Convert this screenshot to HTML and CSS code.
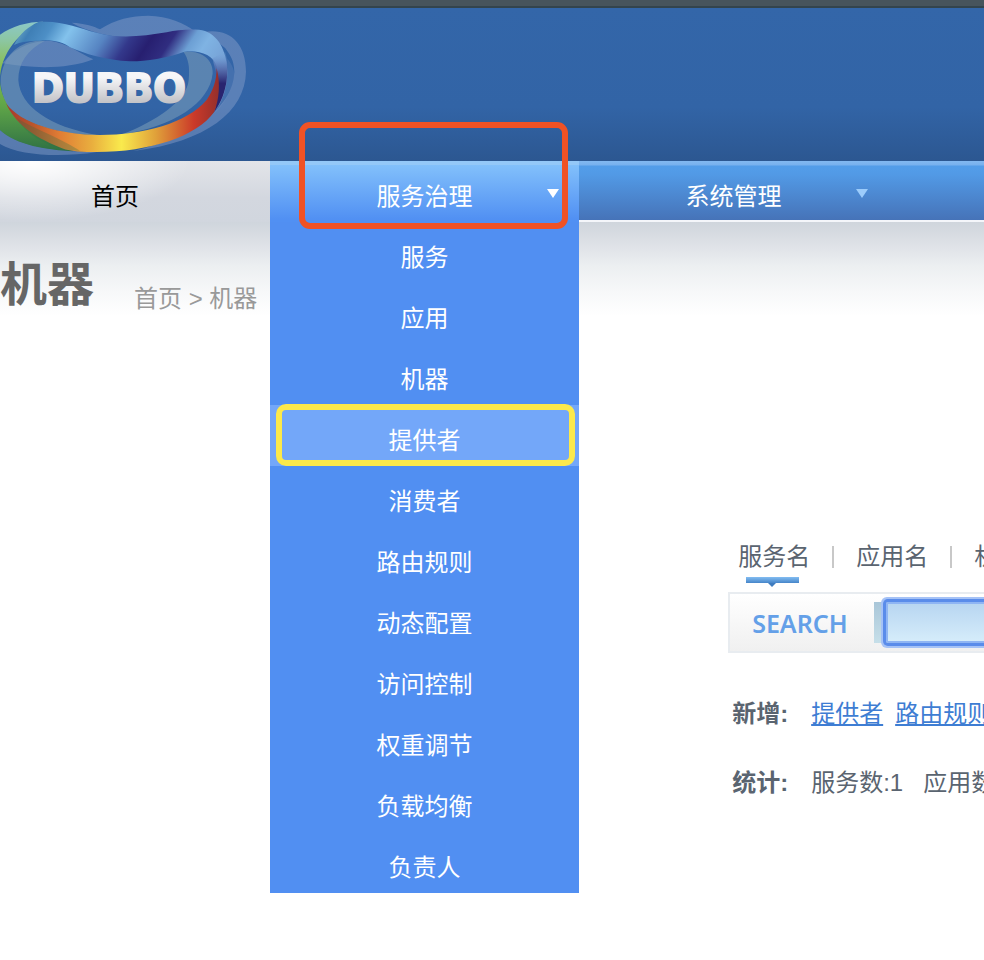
FILE: index.html
```html
<!DOCTYPE html>
<html lang="zh-CN">
<head>
<meta charset="utf-8">
<title>机器</title>
<link rel="stylesheet" href="styles.css">
</head>
<body>
<header class="header">
  <svg class="logo" viewBox="0 24 810 459" role="img" aria-label="DUBBO">
    <defs>
      <linearGradient id="green" x1="0" y1="0" x2="0" y2="1"><stop offset="0" stop-color="#8cc8c8"/><stop offset=".15" stop-color="#8cc6a0"/><stop offset=".35" stop-color="#88bd50"/><stop offset=".65" stop-color="#5fa548"/><stop offset="1" stop-color="#2f7144"/></linearGradient>
      <linearGradient id="blue" gradientUnits="userSpaceOnUse" x1="50" y1="60" x2="600" y2="420"><stop offset="0" stop-color="#7fbccb"/><stop offset=".08" stop-color="#3f7fb6"/><stop offset=".15" stop-color="#4d8fc6"/><stop offset=".23" stop-color="#83c2ec"/><stop offset=".38" stop-color="#5684c2"/><stop offset=".48" stop-color="#33388b"/><stop offset=".56" stop-color="#271f70"/><stop offset=".64" stop-color="#302d80"/><stop offset=".72" stop-color="#6c9fd4"/><stop offset=".78" stop-color="#7fb3e3"/><stop offset="1" stop-color="#6c8fc8"/></linearGradient>
      <linearGradient id="side" gradientUnits="userSpaceOnUse" x1="0" y1="150" x2="0" y2="250"><stop offset="0" stop-color="#7fb3e3" stop-opacity="0"/><stop offset=".4" stop-color="#6384c0" stop-opacity=".8"/><stop offset="1" stop-color="#29246f"/></linearGradient>
      <linearGradient id="fire" gradientUnits="userSpaceOnUse" x1="20" y1="0" x2="658" y2="0"><stop offset="0" stop-color="#a83a2b"/><stop offset=".12" stop-color="#b9552c"/><stop offset=".25" stop-color="#e07d35"/><stop offset=".4" stop-color="#e9ae3e"/><stop offset=".54" stop-color="#f9ea4d"/><stop offset=".7" stop-color="#e0a13a"/><stop offset=".88" stop-color="#cb3a29"/><stop offset="1" stop-color="#942f2c"/></linearGradient>
      <linearGradient id="silver" x1="0" y1="0" x2="0" y2="1"><stop offset=".25" stop-color="#f6f6f8"/><stop offset=".8" stop-color="#c4c4c8"/></linearGradient>
    </defs>
    <g fill="#8ba2cb" fill-opacity=".45">
      <path d="M215 68C255 70 285 80 300 88C345 58 395 47 445 47C505 49 555 70 582 92C520 92 450 110 395 113C335 112 260 95 215 68Z"/>
      <path d="M615 95C690 84 738 130 738 215C735 335 620 425 400 453C560 415 700 330 703 215C702 180 690 165 676 145Z"/>
      <path d="M682 175C692 190 703 205 703 225C698 270 675 310 643 340C665 300 684 240 682 175Z" fill-opacity=".2"/>
      <path d="M8 190C45 140 100 122 150 122C200 128 240 160 280 178C200 210 90 205 8 190Z"/>
      <path d="M0 390C50 430 120 452 290 457C180 472 60 468 0 432Z"/>
    </g>
    <g fill="#7c9fb9" fill-opacity=".55">
      <path d="M2 240C8 170 50 130 110 122L135 122C80 150 55 190 55 240C60 320 150 380 290 405C180 405 60 370 20 315C8 290 2 265 2 240Z"/>
      <path d="M550 155C600 150 640 175 638 220C630 310 520 380 360 405C470 365 562 300 566 240C570 200 565 175 550 155Z"/>
    </g>
    <path fill="url(#green)" d="M-5 108C30 80 80 65 130 65C60 90 0 160 0 240C0 310 70 410 220 454C140 450 40 435 -5 385Z"/>
    <path fill="url(#blue)" d="M115 66C185 60 235 85 290 98C360 118 430 108 500 97C540 88 590 86 615 93C660 110 682 160 682 220C680 270 665 310 643 335C655 290 655 250 650 200C640 165 600 150 553 155C500 175 430 185 390 184C320 182 250 160 210 142C190 125 150 118 120 122C90 122 60 125 42 135C60 100 85 80 115 66Z"/>
    <path fill="url(#side)" d="M637 175L676 155C688 205 685 280 643 335C656 290 656 240 637 175Z"/>
    <path fill="url(#fire)" d="M18 310C60 370 180 405 300 405C430 405 560 370 620 300C640 270 650 240 650 205C662 250 657 300 643 335C590 410 450 455 290 456C240 457 200 452 175 440C100 410 45 370 18 310Z"/>
    <path fill="#2f7144" fill-opacity=".3" d="M50 355C100 385 160 405 240 452C190 455 90 425 50 355Z"/>
    <text class="logo-text" x="96" y="306">DUBBO</text>
  </svg>
</header>

<nav class="nav">
  <a class="nav-item nav-home" href="#">首页</a>
  <div class="nav-group nav-open">
    <a class="nav-item" href="#">服务治理</a>
    <ul class="menu">
      <li><a href="#">服务</a></li>
      <li><a href="#">应用</a></li>
      <li><a href="#">机器</a></li>
      <li><a class="current" href="#">提供者</a></li>
      <li><a href="#">消费者</a></li>
      <li><a href="#">路由规则</a></li>
      <li><a href="#">动态配置</a></li>
      <li><a href="#">访问控制</a></li>
      <li><a href="#">权重调节</a></li>
      <li><a href="#">负载均衡</a></li>
      <li><a href="#">负责人</a></li>
    </ul>
    <span class="mark-red"></span>
  </div>
  <div class="nav-rest">
    <div class="nav-group"><a class="nav-item" href="#">系统管理</a></div>
  </div>
</nav>

<main class="main">
  <div class="page-head">
    <h1>机器</h1>
    <p class="crumbs"><a href="#">首页</a> &gt; 机器</p>
  </div>
  <section class="panel">
    <div class="tabs">
      <a class="active" href="#">服务名</a><i></i><a href="#">应用名</a><i></i><a href="#">机器名</a>
    </div>
    <form class="search">
      <label for="q">SEARCH</label>
      <div class="field"><input id="q" type="text"></div>
    </form>
    <dl class="facts">
      <dt>新增:</dt>
      <dd><a href="#">提供者</a><a href="#">路由规则</a></dd>
      <dt>统计:</dt>
      <dd class="stats"><span>服务数:1</span><span>应用数</span></dd>
    </dl>
  </section>
</main>
</body>
</html>
```
FILE: styles.css
```css
* { box-sizing: border-box; }

body {
  margin: 0;
  overflow-x: hidden;
  background: #fff;
  color: #5a6470;
  font: 24px/36px "Liberation Sans", "Noto Sans CJK SC", sans-serif;
}

a { color: inherit; text-decoration: none; }

.header {
  padding-top: 2px;
  border-top: 6px solid #47545c;
  background: linear-gradient(#33444d 2px, #3366a9 2px, #3264a6 65%, #2c5791 100%);
}

.logo { display: block; width: 270px; height: 153px; }

.logo-text {
  fill: url(#silver);
  stroke: url(#silver);
  stroke-width: 6px;
  font: bold 115px "DejaVu Sans", sans-serif;
}

/* Navigation */
.nav {
  display: flex;
  height: 61px;
  background: radial-gradient(ellipse 160px 60px at 30px 0, #fff, #fff0), linear-gradient(#e3e5e9, #d3d7df 60%, #d1d6de);
}

.nav-item {
  display: block;
  line-height: 72px;
  text-align: center;
  color: #fff;
}

.nav-home { width: 270px; padding-right: 40px; color: #000; }

.nav-group { position: relative; width: 309px; }

.nav-group::after {
  content: "";
  position: absolute;
  top: 28px;
  right: 20px;
  border: 6px solid transparent;
  border-top: 9px solid #9cccfb;
  border-bottom: 0;
}

.nav-open {
  border-top: 4px solid #94c8f8;
  background: linear-gradient(#82c0fb, #5190f3 95%);
}

.nav-open .nav-item { line-height: 64px; }

.nav-open::after { top: 24px; border-top-color: #fff; }

.nav-rest {
  flex: 1;
  border-bottom: 2px solid #f4f6fa;
  background: linear-gradient(#82b8f0 0, #78b1ee 4px, #539de9 5px, #529ae6 22%, #4673b8 100%);
}

.menu {
  position: absolute;
  z-index: 1;
  top: 57px;
  left: 0;
  width: 100%;
  margin: 0;
  padding: 0;
  list-style: none;
  background: #518ff2;
}

.menu a {
  display: block;
  height: 61px;
  line-height: 72px;
  text-align: center;
  color: #fff;
}

.menu .current { position: relative; background: #73a7f9; }

.menu .current::after {
  content: "";
  position: absolute;
  inset: -1px 4px 0 6px;
  border: 6px solid #fce94b;
  border-radius: 10px;
}

.mark-red {
  position: absolute;
  z-index: 2;
  inset: -43px 11px -7px 29px;
  border: 6px solid #f05225;
  border-radius: 11px;
  pointer-events: none;
}

/* Content */
.main {
  background: linear-gradient(#cfd5dc 0, #dfe2e7 24px, #eceff1 44px, #f7f8f9 70px, #fff 94px);
}

.page-head {
  display: flex;
  align-items: flex-end;
  gap: 40px;
  height: 98px;
}

.page-head h1 {
  margin: 0;
  color: #666;
  font-size: 47px;
  line-height: 70px;
}

.crumbs { margin: 0; padding-bottom: 3px; color: #999; }

.panel {
  margin: 215px 0 0 74%;
  white-space: nowrap;
}

.tabs {
  display: flex;
  align-items: center;
  height: 57px;
  padding: 0 0 14px 10px;
  gap: 22px;
}

.tabs a, .tabs i { flex: none; }

.tabs i { width: 2px; height: 22px; background: #c8c8c8; }

.tabs .active { position: relative; }

.tabs .active::before {
  content: "";
  position: absolute;
  top: 38px;
  left: 8px;
  width: 53px;
  height: 6px;
  background: linear-gradient(#83bdf2, #4685c9);
}

.tabs .active::after {
  content: "";
  position: absolute;
  top: 44px;
  left: 30px;
  border: 4px solid transparent;
  border-top-color: #3f7cbf;
  border-bottom: 0;
}

.search {
  display: flex;
  align-items: center;
  height: 61px;
  padding-left: 22px;
  border: 2px solid #e8ecf0;
  border-right: 0;
  background: linear-gradient(#fff, #f0f0f0);
}

.search label {
  flex: none;
  width: 122px;
  color: #64a0e8;
  font: 600 25px "Noto Sans", sans-serif;
}

.field {
  flex: 1;
  min-width: 0;
  height: 41px;
  padding-left: 12px;
  background: linear-gradient(#a9c6d8, #c6dfe9);
}

.field input {
  display: block;
  width: 500px;
  height: 41px;
  padding: 0 8px;
  border: 2px solid #8fb5f3;
  outline: 0;
  border-radius: 2px;
  box-shadow: 0 0 0 3px #5a8cea, 0 0 0 5px #a5c2f6;
  background: linear-gradient(#b8d6f1, #d5ecfa);
  font: inherit;
}

.facts {
  display: grid;
  grid-template-columns: 79px 1fr;
  row-gap: 33px;
  margin: 43px 0 0;
  padding: 0 0 160px 4px;
}

.facts dt { font-weight: bold; }

.facts dd { display: flex; gap: 12px; margin: 0; }

.facts dd a { color: #3e7dd3; text-decoration: underline; }

.facts .stats { gap: 20px; }
```
